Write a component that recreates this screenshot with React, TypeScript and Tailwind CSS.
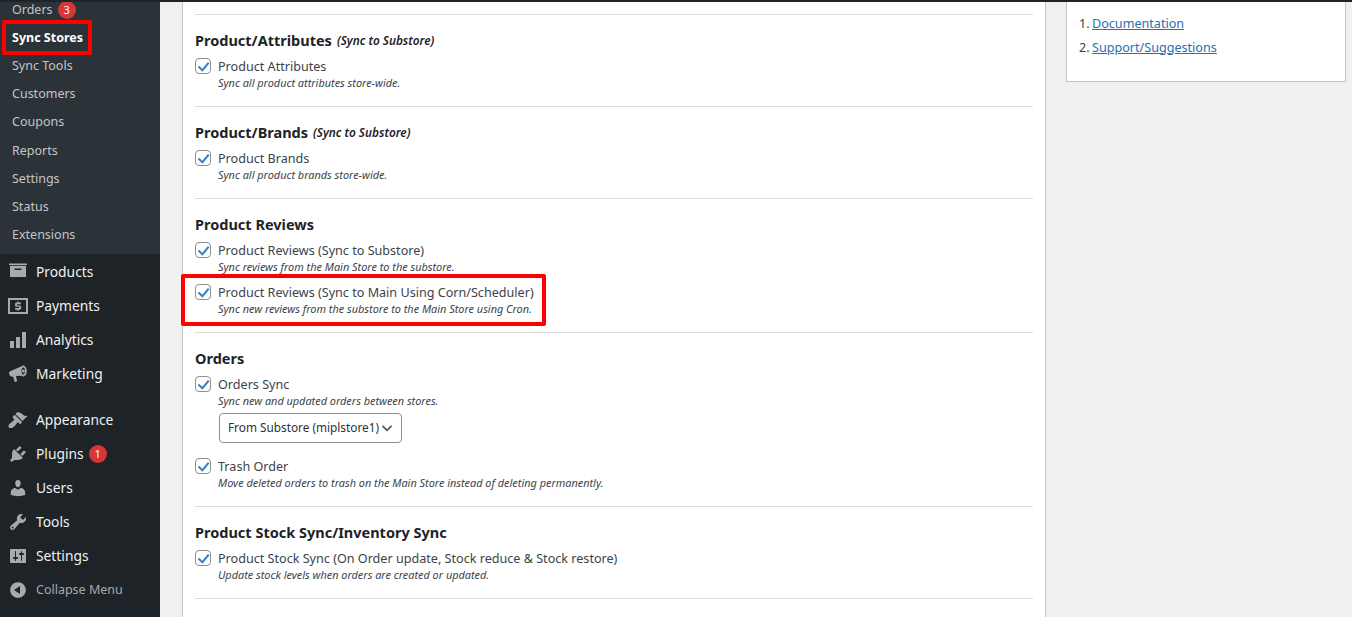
import type { ReactNode } from 'react';

const subItems = ['Orders', 'Sync Stores', 'Sync Tools', 'Customers', 'Coupons', 'Reports', 'Settings', 'Status', 'Extensions'];

// Sidebar icons, drawn on a 20x20 grid
const icons: Record<string, ReactNode> = {
    Products: <path d="M1 1.500h18v1.500H1zM2 3.800h16V15H2zM6.500 6.500V8h7V6.500z" fillRule="evenodd" />,
    Payments: <path d="M0 2h20v16H0zM2 4v12h16V4zM10.700 5.500v1.100h2.300v1.600H9.300c-.3 0-.4.100-.4.400v.5c0 .3.100.4.400.4h2.200c1 0 1.700.6 1.700 1.600v1c0 1-.7 1.600-1.700 1.600h-.8v1H9.300v-1H7.200v-1.600h3.700c.3 0 .4-.1.400-.4v-.5c0-.3-.1-.4-.4-.4H8.700C7.700 10.800 7 10.200 7 9.200v-1c0-1 .7-1.600 1.700-1.600h.6V5.500z" fillRule="evenodd" />,
    Analytics: <path d="M2 11h4v7H2zM8 7h4v11H8zM14 2h4v16h-4z" />,
    Marketing: <path d="M15.500 1.500c2 .5 3.300 3 3.300 5.500 0 3-1.600 5.500-3.500 5.500-.6 0-1.200-.2-1.700-.7L8 12l1 4.500c.1.600-.3 1.200-.9 1.300l-1.400.3-1.500-5.300C3 12.800 1 11.500 1 9.500 1 7.800 2.300 6.800 4 6.500l9.500-4.200c.5-.5 1.300-.9 2-.8zM15.300 3.500c-1 0-1.800 1.600-1.800 3.500s.8 3.500 1.800 3.500 1.800-1.600 1.800-3.500-.8-3.500-1.800-3.500zM15.300 5.500a1.500 1.500 0 1 1 0 3 1.500 1.500 0 0 1 0-3z" fillRule="evenodd" />,
    Appearance: <path d="M14.480 11.060L7.410 3.990l1.500-1.500c.5-.56 2.300-.47 3.510.32 1.210.8 1.430 1.280 2.910 2.100 1.180.64 2.450 1.260 4.450.85zm-.71.710L6.700 4.700 4.930 6.470c-.39.39-.39 1.020 0 1.410l1.060 1.060c.39.39.39 1.030 0 1.420-.6.6-1.430 1.110-2.210 1.690-.35.26-.7.53-1.010.84C1.430 13.230 0 15 .73 17.290c.21.2.4.39.6.6 2.270.71 4.070-.69 5.410-1.990.3-.3.57-.66.83-1.010.58-.78 1.090-1.600 1.690-2.210.39-.39 1.020-.39 1.410 0l1.060 1.060c.39.39 1.020.39 1.410 0z" />,
    Plugins: <path d="M13.110 4.360L9.870 7.600 8 5.730l3.240-3.240c.35-.34 1.050-.2 1.560.32.52.51.66 1.210.31 1.550zm-8 1.770l.91-1.120 9.010 9.010-1.190.84c-.71.71-2.630 1.160-3.820 1.160H6.140L4.900 17.260c-.59.59-1.540.59-2.120 0-.59-.58-.59-1.530 0-2.120l1.240-1.240v-3.880c0-1.130.4-3.190 1.090-3.890zm7.260 3.970l3.240-3.240c.34-.35 1.040-.21 1.550.31.520.51.660 1.210.310 1.550l-3.240 3.250z" />,
    Users: <path d="M10 9.250c-2.270 0-2.730-3.440-2.730-3.440C7 4.020 7.820 2 9.970 2c2.160 0 2.980 2.020 2.710 3.810 0 0-.41 3.440-2.680 3.440zm0 2.570L12.720 10c2.390 0 4.520 2.330 4.520 4.530v2.490s-3.650 1.130-7.240 1.130c-3.650 0-7.240-1.130-7.240-1.130v-2.490c0-2.250 1.940-4.480 4.470-4.480z" />,
    Tools: <path d="M16.680 9.770c-1.340 1.340-3.300 1.670-4.950.99l-5.410 6.520c-.99.99-2.590.99-3.580 0s-.99-2.590 0-3.570l6.520-5.420c-.68-1.650-.35-3.610.99-4.950 1.280-1.280 3.120-1.620 4.720-1.060l-2.890 2.890 2.820 2.820 2.860-2.870c.53 1.580.18 3.390-1.080 4.650zM3.810 16.210c.4.39 1.040.39 1.430 0 .4-.4.4-1.040 0-1.430-.39-.4-1.030-.4-1.430 0-.39.39-.39 1.030 0 1.430z" />,
    Settings: <path d="M18 16V4c0-.55-.45-1-1-1H3c-.55 0-1 .45-1 1v12c0 .55.45 1 1 1h14c.55 0 1-.45 1-1zM8 11h1c.55 0 1 .45 1 1s-.45 1-1 1H8v1.500c0 .28-.22.5-.5.5s-.5-.22-.5-.5V13H6c-.55 0-1-.45-1-1s.45-1 1-1h1V5.500c0-.28.22-.5.5-.5s.5.22.5.5V11zm5-2h-1c-.55 0-1-.45-1-1s.45-1 1-1h1V5.500c0-.28.22-.5.5-.5s.5.22.5.5V7h1c.55 0 1 .45 1 1s-.45 1-1 1h-1v5.500c0 .28-.22.5-.5.5s-.5-.22-.5-.5V9z" fillRule="evenodd" />,
    'Collapse Menu': <path d="M10 2.160c4.330 0 7.840 3.510 7.840 7.840s-3.510 7.840-7.840 7.840-7.840-3.510-7.840-7.840S5.670 2.160 10 2.160zm2 11.840V6l-6 4z" fillRule="evenodd" />,
};

function MenuItem({ label, badge }: { label: string; badge?: string }) {
    const collapse = label === 'Collapse Menu';
    return (
        <div className={`flex h-[34px] items-center pl-[8px] ${collapse ? 'text-[12.500px] text-[#a7aaad]' : 'text-[13.800px] text-[#f0f0f1]'}`}>
            <svg viewBox="0 0 20 20" className="h-5 w-5 fill-[#a7aaad]">{icons[label]}</svg>
            <span className="ml-[8px]">{label}</span>
            {badge && <Badge text={badge} className="ml-[5px]" />}
        </div>
    );
}

function Badge({ text, className }: { text: string; className: string }) {
    return (
        <span className={`flex h-[18px] w-[18px] items-center justify-center rounded-full bg-[#d63638] text-[11px] text-white ${className}`}>
            {text}
        </span>
    );
}

function Option({ label, desc, children }: { label: string; desc: string; children?: ReactNode }) {
    return (
        <div>
            <div className="flex h-5 items-center">
                <span className="flex h-4 w-4 -translate-y-px items-center justify-center rounded-[4px] border border-[#8c8f94] bg-white">
                    <svg viewBox="0 0 20 20" className="h-[15px] w-[15px] fill-[#3582c4]">
                        <path d="M17 3.500l2.300 1.800-10 12.200-6.800-6.500 2-2.100 4.500 4.200z" />
                    </svg>
                </span>
                <span className="ml-[7px] text-[12.600px] text-[#3c434a]">{label}</span>
            </div>
            <p className="-mt-[2px] ml-[23px] h-4 text-[10.900px] leading-4 text-[#3c434a] italic">{desc}</p>
            {children}
        </div>
    );
}

function Section({ title, note, children }: { title: string; note?: string; children: ReactNode }) {
    return (
        <section className="border-b border-[#dcdcde] pt-4 pb-[15px]">
            <h3 className="mb-[6px] flex h-5 items-center text-[14.500px] font-bold text-[#1d2327]">
                {title}
                {note && <em className="ml-[5px] text-[11.800px] font-semibold">{note}</em>}
            </h3>
            <div className="flex flex-col gap-2">{children}</div>
        </section>
    );
}

export default function App() {
    return (
        <div className="relative flex h-[617px] flex-col overflow-hidden bg-[#f0f0f1] font-['Noto_Sans',sans-serif]">
            <div className="h-[2px] shrink-0 bg-[#1d2327]" />
            <div className="flex min-h-0 flex-1">
                <aside className="w-40 shrink-0 bg-[#1d2327]">
                    <div className="h-[252px] overflow-hidden bg-[#2c3338]">
                        {subItems.map((item, i) => (
                            <div
                                key={item}
                                className={`flex h-[28.200px] items-center pl-3 text-[12.500px] ${i === 0 ? '-mt-[6px]' : ''} ${item === 'Sync Stores' ? 'font-bold text-white' : 'text-[#c3c4c7]'}`}
                            >
                                {item}
                                {item === 'Orders' && <Badge text="3" className="ml-[5px]" />}
                            </div>
                        ))}
                    </div>
                    <div className="pt-px">
                        <MenuItem label="Products" />
                        <MenuItem label="Payments" />
                        <MenuItem label="Analytics" />
                        <MenuItem label="Marketing" />
                        <div className="h-3" />
                        <MenuItem label="Appearance" />
                        <MenuItem label="Plugins" badge="1" />
                        <MenuItem label="Users" />
                        <MenuItem label="Tools" />
                        <MenuItem label="Settings" />
                        <MenuItem label="Collapse Menu" />
                    </div>
                </aside>
                <main className="flex min-w-0 flex-1 items-start gap-5 pl-[22px]">
                    <div className="h-[700px] w-[864px] shrink-0 border-x border-[#c3c4c7] bg-white px-3 pt-3">
                        <div className="border-b border-[#dcdcde]" />
                        <Section title="Product/Attributes" note="(Sync to Substore)">
                            <Option label="Product Attributes" desc="Sync all product attributes store-wide." />
                        </Section>
                        <Section title="Product/Brands" note="(Sync to Substore)">
                            <Option label="Product Brands" desc="Sync all product brands store-wide." />
                        </Section>
                        <Section title="Product Reviews">
                            <Option label="Product Reviews (Sync to Substore)" desc="Sync reviews from the Main Store to the substore." />
                            <Option label="Product Reviews (Sync to Main Using Corn/Scheduler)" desc="Sync new reviews from the substore to the Main Store using Cron." />
                        </Section>
                        <Section title="Orders">
                            <Option label="Orders Sync" desc="Sync new and updated orders between stores.">
                                <div className="mt-1 mb-[6px] ml-6 flex h-[30px] w-[183px] items-center justify-between rounded-[4px] border border-[#8c8f94] bg-white px-2 text-[11.800px] whitespace-nowrap text-[#2c3338]">
                                    From Substore (miplstore1)
                                    <svg viewBox="0 0 12 12" className="h-3 w-3 shrink-0 fill-none stroke-[#50575e] stroke-[1.800]">
                                        <path d="M1.500 3.800L6 8.300l4.500-4.500" />
                                    </svg>
                                </div>
                            </Option>
                            <Option label="Trash Order" desc="Move deleted orders to trash on the Main Store instead of deleting permanently." />
                        </Section>
                        <Section title="Product Stock Sync/Inventory Sync">
                            <Option label="Product Stock Sync (On Order update, Stock reduce & Stock restore)" desc="Update stock levels when orders are created or updated." />
                        </Section>
                    </div>
                    <div className="h-[80px] w-[280px] shrink-0 border-x border-b border-[#c3c4c7] bg-white pt-[10px] pl-3 text-[12.600px] text-[#3c434a]">
                        <ol>
                            <li className="flex h-6 items-center">
                                <span className="w-[13px]">1.</span>
                                <a className="text-[#2271b1] underline">Documentation</a>
                            </li>
                            <li className="flex h-6 items-center">
                                <span className="w-[13px]">2.</span>
                                <a className="text-[#2271b1] underline">Support/Suggestions</a>
                            </li>
                        </ol>
                    </div>
                </main>
            </div>
            {/* Red annotation boxes drawn over the screenshot */}
            <div className="absolute top-[20px] left-[2px] h-[35px] w-[90px] rounded-[2px] border-[4px] border-[#ff0000]" />
            <div className="absolute top-[274px] left-[181px] h-[52px] w-[365px] rounded-[2px] border-[4px] border-[#ff0000]" />
        </div>
    );
}
